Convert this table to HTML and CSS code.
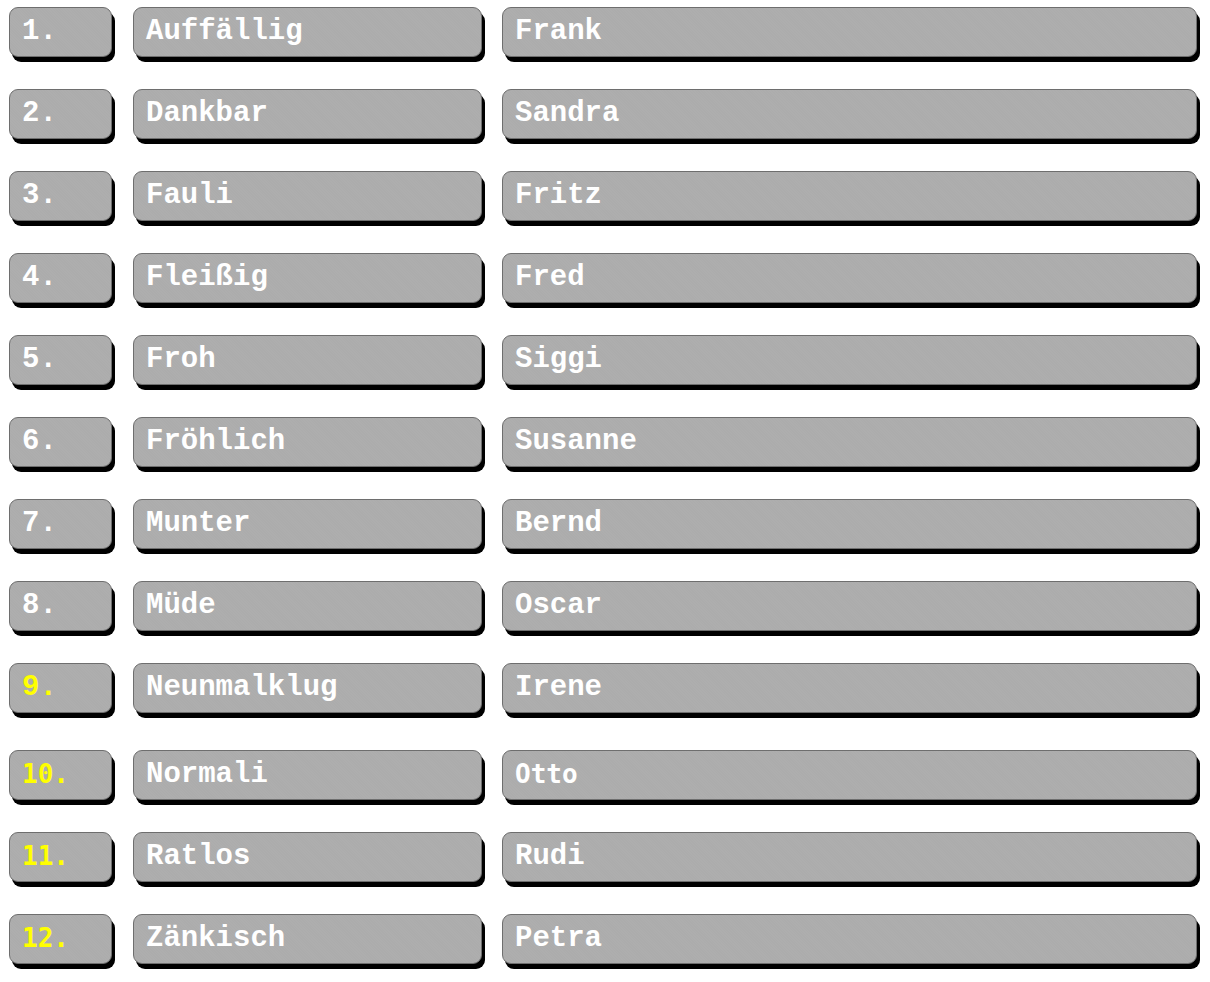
FILE: index.html
```html
<!DOCTYPE html>
<html lang="de">
<head>
<meta charset="utf-8">
<title>Liste</title>
<link rel="stylesheet" href="styles.css">
</head>
<body>
<div class="list">
  <div class="row"><div class="btn num">1.</div><div class="btn adj">Auffällig</div><div class="btn name">Frank</div></div>
  <div class="row"><div class="btn num">2.</div><div class="btn adj">Dankbar</div><div class="btn name">Sandra</div></div>
  <div class="row"><div class="btn num">3.</div><div class="btn adj">Fauli</div><div class="btn name">Fritz</div></div>
  <div class="row"><div class="btn num">4.</div><div class="btn adj">Fleißig</div><div class="btn name">Fred</div></div>
  <div class="row"><div class="btn num">5.</div><div class="btn adj">Froh</div><div class="btn name">Siggi</div></div>
  <div class="row"><div class="btn num">6.</div><div class="btn adj">Fröhlich</div><div class="btn name">Susanne</div></div>
  <div class="row"><div class="btn num">7.</div><div class="btn adj">Munter</div><div class="btn name">Bernd</div></div>
  <div class="row"><div class="btn num">8.</div><div class="btn adj">Müde</div><div class="btn name">Oscar</div></div>
  <div class="row"><div class="btn num yellow">9.</div><div class="btn adj">Neunmalklug</div><div class="btn name">Irene</div></div>
  <div class="row row-wide"><div class="btn num yellow sans">10.</div><div class="btn adj">Normali</div><div class="btn name sans">Otto</div></div>
  <div class="row"><div class="btn num yellow sans">11.</div><div class="btn adj">Ratlos</div><div class="btn name">Rudi</div></div>
  <div class="row"><div class="btn num yellow sans">12.</div><div class="btn adj">Zänkisch</div><div class="btn name">Petra</div></div>
</div>
</body>
</html>
```
FILE: styles.css
```css
html, body {
  margin: 0;
  padding: 0;
  background: #ffffff;
}

.list {
  display: flex;
  flex-direction: column;
  gap: 32px;
  padding: 7px 0 20px 9px;
}

.row {
  display: flex;
}

.row-wide {
  margin-top: 5px;
}

.btn {
  box-sizing: border-box;
  height: 50px;
  padding: 0 0 0 12px;
  border: 1px solid #6e6e6e;
  border-radius: 9px;
  background-color: #acacac;
  background-image: repeating-linear-gradient(45deg, rgba(255,255,255,0.025) 0 1px, transparent 1px 2px);
  box-shadow: 3px 5px 0 #000000;
  color: #ffffff;
  font-family: "Liberation Mono", "Courier New", monospace;
  font-weight: bold;
  font-size: 29px;
  line-height: 47px;
  white-space: nowrap;
  overflow: hidden;
}

.num {
  width: 103px;
  margin-right: 21px;
  padding-left: 12px;
}

.adj {
  width: 349px;
  margin-right: 20px;
}

.name {
  width: 695px;
}

.yellow {
  color: #ffff00;
}

.sans {
  font-family: "DejaVu Sans Mono", monospace;
  font-weight: bold;
  font-size: 26px;
}
```
